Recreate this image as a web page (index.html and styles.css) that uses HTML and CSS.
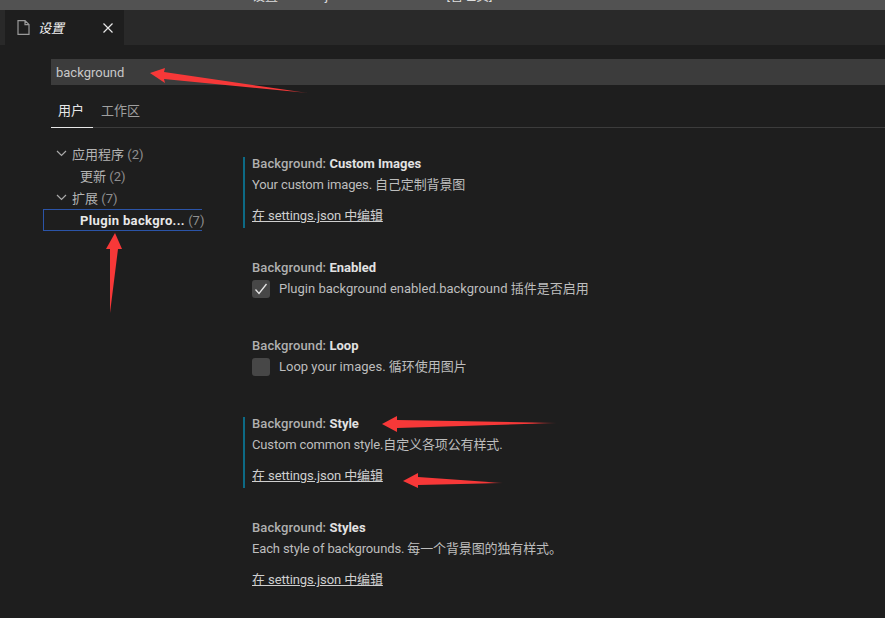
FILE: index.html
```html
<!DOCTYPE html>
<html lang="zh-CN">
<head>
  <meta charset="UTF-8" />
  <title>设置</title>
  <link rel="stylesheet" href="styles.css">
</head>
<body>
  <div class="titlebar"><span class="title-name">设置</span><span class="title-file">json</span><span class="title-tag">[管理员]</span></div>

  <div class="tabbar">
    <div class="tab">
      <svg class="tab-icon" width="13" height="15" viewBox="0 0 13 15"><path d="M1 .6h7l4 4v9.800h-11z M8 .6v4h4" fill="none" stroke="#9a9a9a" stroke-width="1.200"/></svg>
      <span class="tab-name">设置</span>
      <svg class="tab-close" width="10" height="10" viewBox="0 0 10 10"><path d="M.5.500l9 9M9.500.500l-9 9" stroke="#e8e8e8" stroke-width="1.200"/></svg>
    </div>
  </div>

  <div class="search">background</div>

  <div class="scopes">
    <a class="scope active" href="#">用户</a>
    <a class="scope" href="#">工作区</a>
  </div>

  <div class="main-section">
    <div class="tree">
      <div class="tree-row"><svg class="chevron" width="11" height="7" viewBox="0 0 11 7"><path d="M1 1l4.500 4.500L10 1" fill="none" stroke="#aaa" stroke-width="1.200"/></svg>应用程序 <span class="count">(2)</span></div>
      <div class="tree-row child">更新 <span class="count">(2)</span></div>
      <div class="tree-row"><svg class="chevron" width="11" height="7" viewBox="0 0 11 7"><path d="M1 1l4.500 4.500L10 1" fill="none" stroke="#aaa" stroke-width="1.200"/></svg>扩展 <span class="count">(7)</span></div>
      <div class="tree-row selected"><b>Plugin backgro...</b> <span class="count">(7)</span></div>
    </div>

    <div class="settings">
      <div class="setting modified">
        <div class="setting-title">Background: <b>Custom Images</b></div>
        <div class="setting-desc">Your custom images. 自己定制背景图</div>
        <a class="setting-link" href="#">在 settings.json 中编辑</a>
      </div>
      <div class="setting check">
        <div class="setting-title">Background: <b>Enabled</b></div>
        <div class="check-row">
          <span class="box"><svg width="16" height="16" viewBox="0 0 16 16"><path d="M2.500 8.500l3.500 4L13.500 3" fill="none" stroke="#e6e6e6" stroke-width="1.300"/></svg></span>
          <span>Plugin background enabled.background 插件是否启用</span>
        </div>
      </div>
      <div class="setting check">
        <div class="setting-title">Background: <b>Loop</b></div>
        <div class="check-row">
          <span class="box"></span>
          <span>Loop your images. 循环使用图片</span>
        </div>
      </div>
      <div class="setting modified">
        <div class="setting-title">Background: <b>Style</b></div>
        <div class="setting-desc">Custom common style.自定义各项公有样式.</div>
        <a class="setting-link" href="#">在 settings.json 中编辑</a>
      </div>
      <div class="setting">
        <div class="setting-title">Background: <b>Styles</b></div>
        <div class="setting-desc">Each style of backgrounds. 每一个背景图的独有样式。</div>
        <a class="setting-link" href="#">在 settings.json 中编辑</a>
      </div>
    </div>
  </div>

  <!-- red arrows drawn over the screenshot -->
  <svg class="arrows" width="885" height="618" viewBox="0 0 885 618">
    <defs>
      <linearGradient id="fadeA" gradientUnits="userSpaceOnUse" x1="165" y1="75" x2="308" y2="93"><stop offset=".85" stop-color="#f73838"/><stop offset="1" stop-color="#f73838" stop-opacity=".3"/></linearGradient>
      <linearGradient id="fadeC" gradientUnits="userSpaceOnUse" x1="397" y1="424" x2="557" y2="423"><stop offset=".85" stop-color="#f73838"/><stop offset="1" stop-color="#f73838" stop-opacity=".3"/></linearGradient>
      <linearGradient id="fadeD" gradientUnits="userSpaceOnUse" x1="418" y1="481" x2="503" y2="483"><stop offset=".8" stop-color="#f73838"/><stop offset="1" stop-color="#f73838" stop-opacity=".3"/></linearGradient>
    </defs>
    <polygon fill="url(#fadeA)" points="150,73 165,68 164,72 308,93 164,79 165,83"/>
    <polygon fill="#f73838" points="115,233 122,249 118,249 110,313 110,249 106,249"/>
    <polygon fill="url(#fadeC)" points="382,424 397,416 397,420 557,423 397,428 397,432"/>
    <polygon fill="url(#fadeD)" points="403,481 418,473 418,477 503,483 418,485 418,488"/>
  </svg>
</body>
</html>
```

FILE: styles.css
```css
* {
  box-sizing: border-box;
  margin: 0;
  padding: 0;
}

body {
  position: relative;
  height: 618px;
  overflow: hidden;
  background: #1e1e1e;
  color: #c4c4c4;
  font-family: 'Roboto', 'Noto Sans CJK SC', sans-serif;
  font-size: 13px;
}

.titlebar {
  height: 10px;
  background: #525252;
  overflow: hidden;
  display: flex;
  padding-left: 252px;
  color: #ddd;
  line-height: 0;
}
.titlebar span {
  margin-top: -4px;
}
.title-file {
  margin-left: 47px;
}
.title-tag {
  margin-left: 97px;
}

.tabbar {
  height: 35px;
  background: #292929;
  padding-left: 5px;
}
.tab {
  width: 119px;
  height: 35px;
  background: #1e1e1e;
  display: flex;
  align-items: center;
  padding-left: 12px;
}
.tab-name {
  margin-left: 8px;
  font-style: italic;
  color: #f0f0f0;
}
.tab-close {
  margin-left: 39px;
}

.search {
  margin: 14px 0 0 51px;
  height: 26px;
  line-height: 27px;
  padding-left: 5px;
  background: #3c3c3c;
  color: #c8c8c8;
}

.scopes {
  margin: 14px 0 0 51px;
  height: 29px;
  display: flex;
  border-bottom: 1px solid #3c3c3c;
}
.scope {
  padding: 0 7px;
  margin-right: 1px;
  line-height: 24px;
  height: 29px;
  color: #a0a0a0;
  text-decoration: none;
}
.scope.active {
  width: 42px;
  color: #e7e7e7;
  border-bottom: 1px solid #e7e7e7;
}

.main-section {
  display: flex;
  margin-left: 43px;
}

.tree {
  width: 159px;
  margin-top: 15px;
  flex-shrink: 0;
}
.tree-row {
  height: 22px;
  line-height: 24px;
  padding-left: 29px;
  position: relative;
  color: #b4b4b4;
  white-space: nowrap;
}
.tree-row.child {
  padding-left: 37px;
}
.tree-row.selected {
  padding-left: 36px;
  border: 1px solid #2b54a8;
  border-right: 0;
  line-height: 22px;
  color: #e8e8e8;
}
.tree-row.selected b {
  letter-spacing: .35px;
}
.count {
  color: #8f8f8f;
}
.chevron {
  position: absolute;
  left: 13px;
  top: 7px;
}

.settings {
  margin: 29px 0 0 41px;
}
.setting {
  padding-left: 9px;
  margin-bottom: 33px;
}
.setting.modified {
  padding-left: 7px;
  border-left: 2px solid #0d6a85;
}
.setting.check {
  padding-bottom: 8px;
}
.setting-title {
  height: 14px;
  line-height: 14px;
  font-weight: 500;
  letter-spacing: .1px;
  color: #b0b0b0;
  margin-bottom: 5px;
}
.setting-title b {
  font-weight: 700;
  letter-spacing: 0;
  color: #e2e2e2;
}
.setting-desc {
  line-height: 18px;
  letter-spacing: -.13px;
  color: #bdbdbd;
}
.setting-link {
  display: block;
  margin-top: 13px;
  padding-bottom: 3px;
  line-height: 18px;
  letter-spacing: -.1px;
  color: #cfcfcf;
}
.check-row {
  display: flex;
  align-items: center;
  height: 18px;
  margin-top: 5px;
  line-height: 18px;
  color: #bdbdbd;
}
.setting-title + .check-row {
  margin-top: 4px;
}
.box {
  width: 18px;
  height: 18px;
  margin-right: 9px;
  background: #474747;
  border-radius: 3px;
  padding: 1px;
}
.box svg {
  display: block;
}

.arrows {
  position: absolute;
  left: 0;
  top: 0;
  pointer-events: none;
}
```
